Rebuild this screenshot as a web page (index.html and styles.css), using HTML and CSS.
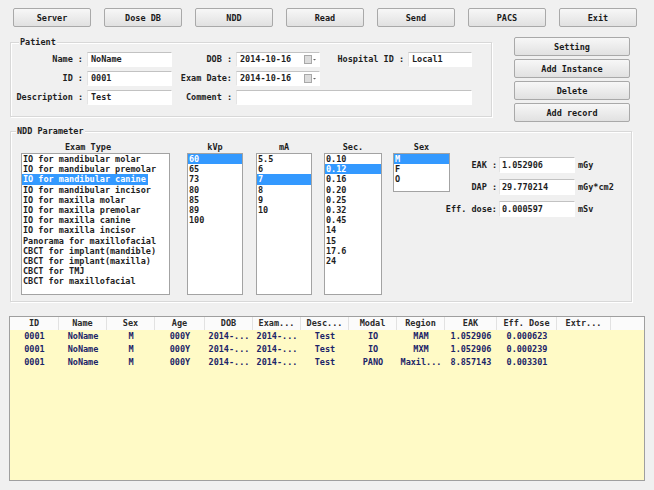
FILE: index.html
```html
<!DOCTYPE html>
<html>
<head>
<meta charset="utf-8">
<link rel="stylesheet" href="styles.css">
</head>
<body>
<div class="toolbar">
  <div class="btn tb">Server</div>
  <div class="btn tb">Dose DB</div>
  <div class="btn tb">NDD</div>
  <div class="btn tb">Read</div>
  <div class="btn tb">Send</div>
  <div class="btn tb">PACS</div>
  <div class="btn tb">Exit</div>
</div>

<div class="top-row">
  <section class="group patient">
    <div class="legend">Patient</div>
    <div class="pgrid">
      <div class="lbl">Name :</div><div class="field">NoName</div>
      <div class="lbl">DOB :</div><div class="field date"><span>2014-10-16</span><svg class="cal" width="13" height="9" viewBox="0 0 13 9"><rect x="0.5" y="0.5" width="7" height="8" fill="#dcdcdc" stroke="#a8a8a8"/><path d="M9 4h3l-1.5 1.6z" fill="#666"/></svg></div>
      <div class="lbl">Hospital ID :</div><div class="field">Local1</div>

      <div class="lbl">ID :</div><div class="field">0001</div>
      <div class="lbl">Exam Date:</div><div class="field date"><span>2014-10-16</span><svg class="cal" width="13" height="9" viewBox="0 0 13 9"><rect x="0.5" y="0.5" width="7" height="8" fill="#dcdcdc" stroke="#a8a8a8"/><path d="M9 4h3l-1.5 1.6z" fill="#666"/></svg></div>
      <div></div><div></div>

      <div class="lbl">Description :</div><div class="field">Test</div>
      <div class="lbl">Comment :</div><div class="field wide"></div>
    </div>
  </section>
  <div class="side-btns">
    <div class="btn">Setting</div>
    <div class="btn">Add Instance</div>
    <div class="btn">Delete</div>
    <div class="btn">Add record</div>
  </div>
</div>

<section class="group ndd">
  <div class="legend">NDD Parameter</div>
  <div class="ndd-row">
    <div class="col exam">
      <div class="colhead left">Exam Type</div>
      <div class="list">
        <div class="item">IO for mandibular molar</div>
        <div class="item">IO for mandibular premolar</div>
        <div class="item sel fit">IO for mandibular canine</div>
        <div class="item">IO for mandibular incisor</div>
        <div class="item">IO for maxilla molar</div>
        <div class="item">IO for maxilla premolar</div>
        <div class="item">IO for maxilla canine</div>
        <div class="item">IO for maxilla incisor</div>
        <div class="item">Panorama for maxillofacial</div>
        <div class="item">CBCT for implant(mandible)</div>
        <div class="item">CBCT for implant(maxilla)</div>
        <div class="item">CBCT for TMJ</div>
        <div class="item">CBCT for maxillofacial</div>
      </div>
    </div>
    <div class="col kvp">
      <div class="colhead">kVp</div>
      <div class="list">
        <div class="item sel">60</div>
        <div class="item">65</div>
        <div class="item">73</div>
        <div class="item">80</div>
        <div class="item">85</div>
        <div class="item">89</div>
        <div class="item">100</div>
      </div>
    </div>
    <div class="col ma">
      <div class="colhead">mA</div>
      <div class="list">
        <div class="item">5.5</div>
        <div class="item">6</div>
        <div class="item sel">7</div>
        <div class="item">8</div>
        <div class="item">9</div>
        <div class="item">10</div>
      </div>
    </div>
    <div class="col sec">
      <div class="colhead">Sec.</div>
      <div class="list">
        <div class="item">0.10</div>
        <div class="item sel">0.12</div>
        <div class="item">0.16</div>
        <div class="item">0.20</div>
        <div class="item">0.25</div>
        <div class="item">0.32</div>
        <div class="item">0.45</div>
        <div class="item">14</div>
        <div class="item">15</div>
        <div class="item">17.6</div>
        <div class="item">24</div>
      </div>
    </div>
    <div class="col sex">
      <div class="colhead">Sex</div>
      <div class="list short">
        <div class="item sel">M</div>
        <div class="item">F</div>
        <div class="item">O</div>
      </div>
    </div>
    <div class="dose">
      <div class="lbl">EAK :</div><div class="field">1.052906</div><div class="unit">mGy</div>
      <div class="lbl">DAP :</div><div class="field">29.770214</div><div class="unit">mGy*cm2</div>
      <div class="lbl">Eff. dose:</div><div class="field">0.000597</div><div class="unit">mSv</div>
    </div>
  </div>
</section>

<div class="table">
  <div class="trow thead">
    <div>ID</div><div>Name</div><div>Sex</div><div>Age</div><div>DOB</div><div>Exam...</div><div>Desc...</div><div>Modal</div><div>Region</div><div>EAK</div><div>Eff. Dose</div><div>Extr...</div><div class="fill"></div>
  </div>
  <div class="trow">
    <div>0001</div><div>NoName</div><div>M</div><div>000Y</div><div>2014-...</div><div>2014-...</div><div>Test</div><div>IO</div><div>MAM</div><div>1.052906</div><div>0.000623</div><div></div><div class="fill"></div>
  </div>
  <div class="trow">
    <div>0001</div><div>NoName</div><div>M</div><div>000Y</div><div>2014-...</div><div>2014-...</div><div>Test</div><div>IO</div><div>MXM</div><div>1.052906</div><div>0.000239</div><div></div><div class="fill"></div>
  </div>
  <div class="trow">
    <div>0001</div><div>NoName</div><div>M</div><div>000Y</div><div>2014-...</div><div>2014-...</div><div>Test</div><div>PANO</div><div>Maxil...</div><div>8.857143</div><div>0.003301</div><div></div><div class="fill"></div>
  </div>
</div>
</body>
</html>
```

FILE: styles.css
```css
* { box-sizing: border-box; }
html, body { margin: 0; padding: 0; }
body {
  width: 654px;
  height: 490px;
  overflow: hidden;
  background: #f0f0f0;
  font-family: "DejaVu Sans Mono", "Liberation Mono", monospace;
  font-weight: bold;
  font-size: 8.5px;
  color: #1e1e1e;
}

.btn {
  display: flex;
  align-items: center;
  justify-content: center;
  height: 19px;
  border: 1px solid #a9a9a9;
  border-radius: 2px;
  background: linear-gradient(#f7f7f7, #e1e1e1);
  color: #1a1a1a;
  white-space: nowrap;
}

.toolbar {
  display: flex;
  gap: 13px;
  padding: 8px 0 0 13px;
}
.toolbar .btn { width: 78px; }

.top-row {
  display: flex;
  align-items: flex-start;
  margin-top: 10px;
}

.group {
  border: 1px solid #d8d8d8;
  box-shadow: inset 1px 1px 0 #fff, 1px 1px 0 #fff;
}
.legend {
  width: max-content;
  margin-top: -6px;
  line-height: 11px;
  padding: 0 1px;
  background: #f0f0f0;
  color: #1e1e1e;
}

.patient {
  width: 482px;
  height: 75px;
  margin: 5px 0 0 10px;
}
.patient .legend { margin-left: 8px; }

.pgrid {
  display: grid;
  grid-template-columns: 72px 85px 56px 84px 80px 64px;
  grid-auto-rows: 15px;
  column-gap: 4px;
  row-gap: 4px;
  margin-top: 4px;
}
.lbl {
  text-align: right;
  line-height: 15px;
  white-space: nowrap;
}
.field {
  background: #fff;
  border: 1px solid #fff;
  border-top-color: #c2c2c2;
  border-left-color: #e4e4e4;
  line-height: 13px;
  padding-left: 3px;
  white-space: nowrap;
  color: #1e1e1e;
}
.field.wide { grid-column: 4 / span 3; }
.field.date {
  display: flex;
  align-items: center;
  justify-content: space-between;
  padding-right: 2px;
}
.cal { display: block; }

.side-btns {
  display: flex;
  flex-direction: column;
  gap: 3px;
  width: 116px;
  margin-left: 22px;
}

.ndd {
  width: 622px;
  height: 171px;
  margin: 9px 0 0 10px;
}
.ndd .legend { margin-left: 5px; }

.ndd-row {
  display: flex;
  align-items: flex-start;
  margin-top: 6px;
  padding-left: 10px;
}
.col { display: flex; flex-direction: column; }
.colhead {
  height: 10px;
  line-height: 8px;
  text-align: center;
}
.colhead.left { text-align: left; padding-left: 44px; }
.exam { width: 149px; }
.kvp { width: 56px; margin-left: 17px; }
.ma { width: 56px; margin-left: 13px; }
.sec { width: 58px; margin-left: 12px; }
.sex { width: 57px; margin-left: 11px; }

.list {
  height: 142px;
  background: #fff;
  border: 1px solid #a3a3a3;
  overflow: hidden;
}
.list.short { height: 39px; }
.item {
  height: 10.2px;
  line-height: 10.2px;
  padding-left: 1px;
  white-space: nowrap;
}
.item.sel { background: #3399ff; color: #fff; }
.item.fit { width: max-content; padding-right: 2px; }

.dose {
  display: grid;
  grid-template-columns: 60px 76px auto;
  grid-auto-rows: 16px;
  column-gap: 2px;
  row-gap: 6px;
  margin: 14px 0 0 -13px;
}
.dose .lbl { line-height: 16px; }
.dose .field { line-height: 14px; padding-left: 2px; }
.unit { line-height: 16px; padding-left: 1px; }

.table {
  width: 636px;
  height: 165px;
  margin: 14px 0 0 9px;
  border: 1px solid #9f9f9f;
  background: #fffac6;
  overflow: hidden;
}
.trow {
  display: grid;
  grid-template-columns: 49px 48px 48px 50px 48px 48px 48px 48px 48px 52px 60px 54px 1fr;
  height: 13px;
  line-height: 13px;
  color: #1b2468;
}
.trow > div { text-align: center; white-space: nowrap; overflow: hidden; }
.thead {
  background: #fbfbfb;
  color: #2a2a2a;
}
.thead > div { border-right: 1px solid #e2e2e2; }
.thead > .fill { border-right: none; }
```
